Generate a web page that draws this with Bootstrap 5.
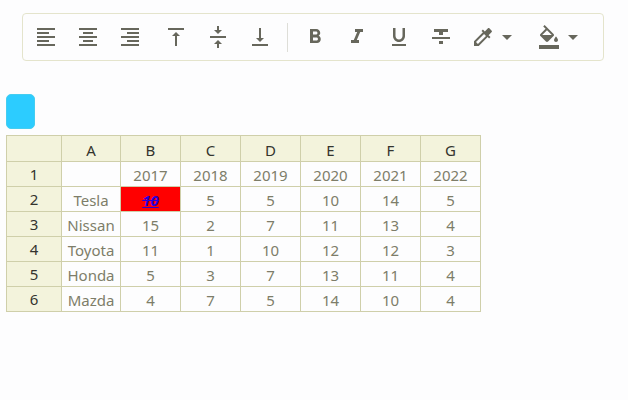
<!DOCTYPE html>
<html lang="en">
<head>
<meta charset="utf-8">
<meta name="viewport" content="width=device-width, initial-scale=1">
<title>Spreadsheet</title>
<link href="https://cdn.jsdelivr.net/npm/bootstrap@5.3.0/dist/css/bootstrap.min.css" rel="stylesheet">
<style>
body { background: #fdfdfe; font-family: "Noto Sans", "Open Sans", sans-serif; }
.format-bar { margin: 13px 24px 0 22px; padding: 0 2px; height: 48px; border: 1px solid #e4e4cc; border-radius: 4px; }
.tool { width: 42px; height: 32px; padding: 0; border: 0; color: #67675c; }
.tool svg { width: 24px; height: 24px; fill: currentColor; display: block; margin: auto; }
.tool-wide { width: 66px; }
.tool-wide svg { margin: 0; }
.tool-group-gap { margin-left: 4px; }
.divider { width: 1px; height: 29px; background: #deded8; margin: 0 6px; }
.swatch { width: 29px; height: 35px; padding: 0; border: 1px solid #45cdf0; border-radius: 5px; background: #2cccff; margin: 33px 0 6px 6px; }
.sheet { width: auto; margin: 0 0 0 6px; border-collapse: collapse; font-size: 15px; line-height: 20px; text-align: center; color: #7d7d69; }
.sheet th, .sheet td { border: 1px solid #cfcfaa; padding: 3px 0 1px; height: 25px; }
.sheet th { background: #f3f3dc; color: #34342e; font-weight: 400; padding: 1px 0; }
.sheet thead th { width: 60px; height: 26px; padding: 3px 0 0; }
.sheet thead .head-col { width: 55px; }
.sheet thead .name-col { width: 59px; }
.sheet .marked { background: #f00; color: #2a00d8; }
</style>
</head>
<body>
<div class="format-bar d-flex align-items-center" role="toolbar" aria-label="Cell format">
  <button class="btn tool" type="button" aria-label="Align left"><svg viewBox="0 0 24 24"><path d="M3 3h18v2H3zM3 7h12v2H3zM3 11h18v2H3zM3 15h12v2H3zM3 19h18v2H3z"/></svg></button>
  <button class="btn tool" type="button" aria-label="Align center"><svg viewBox="0 0 24 24"><path d="M3 3h18v2H3zM7 7h10v2H7zM3 11h18v2H3zM7 15h10v2H7zM3 19h18v2H3z"/></svg></button>
  <button class="btn tool" type="button" aria-label="Align right"><svg viewBox="0 0 24 24"><path d="M3 3h18v2H3zM9 7h12v2H9zM3 11h18v2H3zM9 15h12v2H9zM3 19h18v2H3z"/></svg></button>
  <button class="btn tool tool-group-gap" type="button" aria-label="Align top"><svg viewBox="0 0 24 24"><path d="M8 11h3v10h2V11h3l-4-4-4 4zM4 3v2h16V3H4z"/></svg></button>
  <button class="btn tool" type="button" aria-label="Align middle"><svg viewBox="0 0 24 24"><path d="M8 19h3v4h2v-4h3l-4-4-4 4zm8-14h-3V1h-2v4H8l4 4 4-4zM4 11v2h16v-2H4z"/></svg></button>
  <button class="btn tool" type="button" aria-label="Align bottom"><svg viewBox="0 0 24 24"><path d="M16 13h-3V3h-2v10H8l4 4 4-4zM4 19v2h16v-2H4z"/></svg></button>
  <div class="divider"></div>
  <button class="btn tool" type="button" aria-label="Bold"><svg viewBox="0 0 24 24"><path d="M15.6 10.79c.97-.67 1.65-1.77 1.65-2.79 0-2.26-1.75-4-4-4H7v14h7.04c2.09 0 3.71-1.7 3.71-3.79 0-1.52-.86-2.82-2.15-3.42zM10 6.5h3c.83 0 1.5.67 1.5 1.5s-.67 1.5-1.5 1.5h-3v-3zm3.5 9H10v-3h3.5c.83 0 1.5.67 1.5 1.5s-.67 1.5-1.5 1.5z"/></svg></button>
  <button class="btn tool" type="button" aria-label="Italic"><svg viewBox="0 0 24 24"><path d="M10 4v3h2.21l-3.42 8H6v3h8v-3h-2.21l3.42-8H18V4z"/></svg></button>
  <button class="btn tool" type="button" aria-label="Underline"><svg viewBox="0 0 24 24"><path d="M12 17c3.31 0 6-2.69 6-6V3h-2.5v8c0 1.93-1.57 3.5-3.5 3.5S8.5 12.93 8.5 11V3H6v8c0 3.31 2.69 6 6 6zm-7 2v2h14v-2H5z"/></svg></button>
  <button class="btn tool" type="button" aria-label="Strikethrough"><svg viewBox="0 0 24 24"><path d="M10 19h4v-3h-4v3zM5 4v3h5v3h4V7h5V4H5zM3 14h18v-2H3v2z"/></svg></button>
  <button class="btn tool tool-wide d-flex align-items-center justify-content-center" type="button" aria-label="Text colour"><svg viewBox="0 0 24 24"><path d="M20.71 5.63l-2.34-2.34c-.39-.39-1.02-.39-1.41 0l-3.12 3.12-1.93-1.91-1.41 1.41 1.42 1.42L3 16.25V21h4.75l8.92-8.92 1.42 1.42 1.41-1.41-1.92-1.92 3.12-3.12c.4-.4.4-1.03.01-1.42zM6.92 19L5 17.08l8.06-8.06 1.92 1.92L6.92 19z"/></svg><svg viewBox="0 0 24 24"><path d="M7 10l5 5 5-5z"/></svg></button>
  <button class="btn tool tool-wide d-flex align-items-center justify-content-center" type="button" aria-label="Fill colour"><svg viewBox="0 0 24 24"><path d="M16.56 8.94L7.62 0 6.21 1.41l2.38 2.38-5.15 5.15c-.59.59-.59 1.54 0 2.12l5.5 5.5c.29.29.68.44 1.06.44s.77-.15 1.06-.44l5.5-5.5c.59-.58.59-1.53 0-2.12zM5.21 10L10 5.21 14.79 10H5.21zM19 11.5s-2 2.17-2 3.5c0 1.1.9 2 2 2s2-.9 2-2c0-1.33-2-3.5-2-3.5zM2 20h20v4H2z"/></svg><svg viewBox="0 0 24 24"><path d="M7 10l5 5 5-5z"/></svg></button>
</div>
<button class="swatch d-block" type="button" aria-label="Selected colour"></button>
<table class="sheet">
  <thead>
    <tr><th class="head-col"></th><th class="name-col" scope="col">A</th><th scope="col">B</th><th scope="col">C</th><th scope="col">D</th><th scope="col">E</th><th scope="col">F</th><th scope="col">G</th></tr>
  </thead>
  <tbody>
    <tr><th scope="row">1</th><td></td><td>2017</td><td>2018</td><td>2019</td><td>2020</td><td>2021</td><td>2022</td></tr>
    <tr><th scope="row">2</th><td>Tesla</td><td class="marked fw-bold fst-italic"><u><s>10</s></u></td><td>5</td><td>5</td><td>10</td><td>14</td><td>5</td></tr>
    <tr><th scope="row">3</th><td>Nissan</td><td>15</td><td>2</td><td>7</td><td>11</td><td>13</td><td>4</td></tr>
    <tr><th scope="row">4</th><td>Toyota</td><td>11</td><td>1</td><td>10</td><td>12</td><td>12</td><td>3</td></tr>
    <tr><th scope="row">5</th><td>Honda</td><td>5</td><td>3</td><td>7</td><td>13</td><td>11</td><td>4</td></tr>
    <tr><th scope="row">6</th><td>Mazda</td><td>4</td><td>7</td><td>5</td><td>14</td><td>10</td><td>4</td></tr>
  </tbody>
</table>
<script src="https://cdn.jsdelivr.net/npm/bootstrap@5.3.0/dist/js/bootstrap.bundle.min.js"></script>
</body>
</html>
